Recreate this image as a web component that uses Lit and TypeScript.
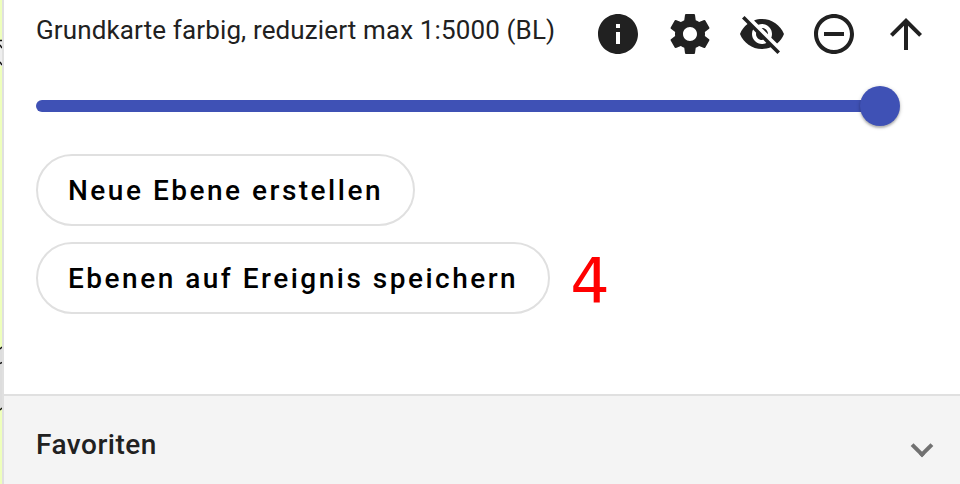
import { LitElement, html, css, svg } from "lit";
import { customElement, property } from "lit/decorators.js";

const ICONS = {
  info: "M12 2C6.48 2 2 6.48 2 12s4.48 10 10 10 10-4.48 10-10S17.52 2 12 2zm1 15h-2v-6h2v6zm0-8h-2V7h2v2z",
  settings:
    "M19.43 12.98c.04-.32.07-.64.07-.98s-.03-.66-.07-.98l2.11-1.65c.19-.15.24-.42.12-.64l-2-3.46c-.12-.22-.39-.3-.61-.22l-2.49 1c-.52-.4-1.08-.73-1.69-.98l-.38-2.65C14.46 2.18 14.25 2 14 2h-4c-.25 0-.46.18-.49.42l-.38 2.65c-.61.25-1.17.59-1.69.98l-2.49-1c-.23-.09-.49 0-.61.22l-2 3.46c-.13.22-.07.49.12.64l2.11 1.65c-.04.32-.07.65-.07.98s.03.66.07.98l-2.11 1.65c-.19.15-.24.42-.12.64l2 3.46c.12.22.39.3.61.22l2.49-1c.52.4 1.08.73 1.69.98l.38 2.65c.03.24.24.42.49.42h4c.25 0 .46-.18.49-.42l.38-2.65c.61-.25 1.17-.59 1.69-.98l2.49 1c.23.09.49 0 .61-.22l2-3.46c.12-.22.07-.49-.12-.64l-2.11-1.65zM12 15.5c-1.93 0-3.5-1.57-3.5-3.5s1.57-3.5 3.5-3.5 3.5 1.57 3.5 3.5-1.57 3.5-3.5 3.5z",
  visibilityOff:
    "M12 7c2.76 0 5 2.24 5 5 0 .65-.13 1.26-.36 1.83l2.92 2.92c1.51-1.26 2.7-2.89 3.43-4.75-1.73-4.39-6-7.5-11-7.5-1.4 0-2.74.25-3.98.7l2.16 2.16C10.74 7.13 11.35 7 12 7zM2 4.27l2.28 2.28.46.46C3.08 8.3 1.78 10.02 1 12c1.73 4.39 6 7.5 11 7.5 1.55 0 3.03-.3 4.38-.84l.42.42L19.73 22 21 20.73 3.27 3 2 4.27zM7.53 9.8l1.55 1.55c-.05.21-.08.43-.08.65 0 1.66 1.34 3 3 3 .22 0 .44-.03.65-.08l1.55 1.55c-.67.33-1.41.53-2.2.53-2.76 0-5-2.24-5-5 0-.79.2-1.53.53-2.2zm4.31-.78l3.15 3.15.02-.16c0-1.66-1.34-3-3-3l-.17.01z",
  remove:
    "M7 11v2h10v-2H7zm5-9C6.48 2 2 6.48 2 12s4.48 10 10 10 10-4.48 10-10S17.52 2 12 2zm0 18c-4.41 0-8-3.59-8-8s3.59-8 8-8 8 3.59 8 8-3.59 8-8 8z",
  up: "M4 12l1.41 1.41L11 7.83V20h2V7.83l5.58 5.59L20 12l-8-8-8 8z",
};

@customElement("layer-icon")
class LayerIcon extends LitElement {
  @property() name: keyof typeof ICONS = "info";
  static styles = css`
    :host { display: block; width: 48px; height: 48px; color: #212121; }
    svg { display: block; width: 100%; height: 100%; fill: currentColor; }
  `;
  render() {
    return html`<svg viewBox="0 0 24 24" aria-hidden="true">${svg`<path d=${ICONS[this.name]}></path>`}</svg>`;
  }
}

@customElement("opacity-slider")
class OpacitySlider extends LitElement {
  static styles = css`
    :host { display: flex; align-items: center; height: 40px; }
    .track { flex: 1; height: 12px; border-radius: 6px; background: #3f51b5; margin-right: -20px; }
    .thumb {
      width: 40px; height: 40px; border-radius: 50%; background: #3f51b5;
      box-shadow: 0 2px 2px rgba(0, 0, 0, 0.2), 0 1px 4px rgba(0, 0, 0, 0.2);
    }
  `;
  render() {
    return html`<div class="track"></div><div class="thumb"></div>`;
  }
}

@customElement("app-root")
class AppRoot extends LitElement {
  static styles = css`
    :host {
      display: flex; width: 960px; height: 484px; overflow: hidden;
      background: #fff; color: #212121; font-family: Roboto, sans-serif;
    }
    .map { width: 2px; height: 484px; flex: none; display: block; }
    .panel {
      flex: 1; min-width: 0; display: flex; flex-direction: column;
      border-left: 2px solid #e0e0e0;
    }
    .content { flex: none; height: 394px; box-sizing: border-box; padding: 10px 30px 0 32px; }
    .layer { display: flex; height: 48px; }
    .name {
      width: 558px; flex: none; font-size: 26px; line-height: 40px;
      letter-spacing: 0.13px; white-space: nowrap;
    }
    .tools { display: flex; gap: 24px; }
    opacity-slider { width: 864px; margin-top: 28px; }
    .actions {
      display: flex; flex-direction: column; align-items: flex-start;
      gap: 16px; margin-top: 28px;
    }
    .row { display: flex; align-items: center; height: 72px; gap: 20px; }
    button {
      height: 72px; padding: 2px 30px 0; border: 2px solid #e0e0e0; border-radius: 36px;
      background: #fff; color: #000; font: 500 28px/66px Roboto, sans-serif;
      letter-spacing: 2.5px; white-space: nowrap;
    }
    .step { font: 62px/72px "DejaVu Sans", sans-serif; color: #f00; padding-top: 7px; }
    .favorites {
      flex: 1; display: flex; justify-content: space-between; align-items: flex-start;
      border-top: 2px solid #e0e0e0; background: #f4f4f4; padding: 0 30px 0 32px;
    }
    .title { font-size: 28px; font-weight: 500; line-height: 98px; letter-spacing: 0.5px; }
    .chevron {
      width: 12px; height: 12px; margin-top: 42px; border: solid #717171;
      border-width: 0 4px 4px 0; transform: rotate(45deg);
    }
  `;

  render() {
    return html`
      <svg class="map" viewBox="0 0 2 484" aria-hidden="true">
        <rect width="2" height="484" fill="#eeffbb"></rect>
        <path d="M0 40h2v26H0z" fill="#eeeeee"></path>
        <path d="M0 348h2v60H0z" fill="#dddddd"></path>
        <path d="M0 40.500h2M0 45l2 3M0 62l2 3M0 349l2-2M0 363.500l2-1M0 410l2-2" stroke="#111" stroke-width="1.500"></path>
      </svg>
      <main class="panel">
        <section class="content">
          <div class="layer">
            <span class="name">Grundkarte farbig, reduziert max 1:5000 (BL)</span>
            <div class="tools">
              ${(["info", "settings", "visibilityOff", "remove", "up"] as const).map(
                (n) => html`<layer-icon .name=${n}></layer-icon>`
              )}
            </div>
          </div>
          <opacity-slider></opacity-slider>
          <div class="actions">
            <div class="row"><button>Neue Ebene erstellen</button></div>
            <div class="row"><button>Ebenen auf Ereignis speichern</button><span class="step">4</span></div>
          </div>
        </section>
        <section class="favorites">
          <span class="title">Favoriten</span>
          <span class="chevron"></span>
        </section>
      </main>
    `;
  }
}
